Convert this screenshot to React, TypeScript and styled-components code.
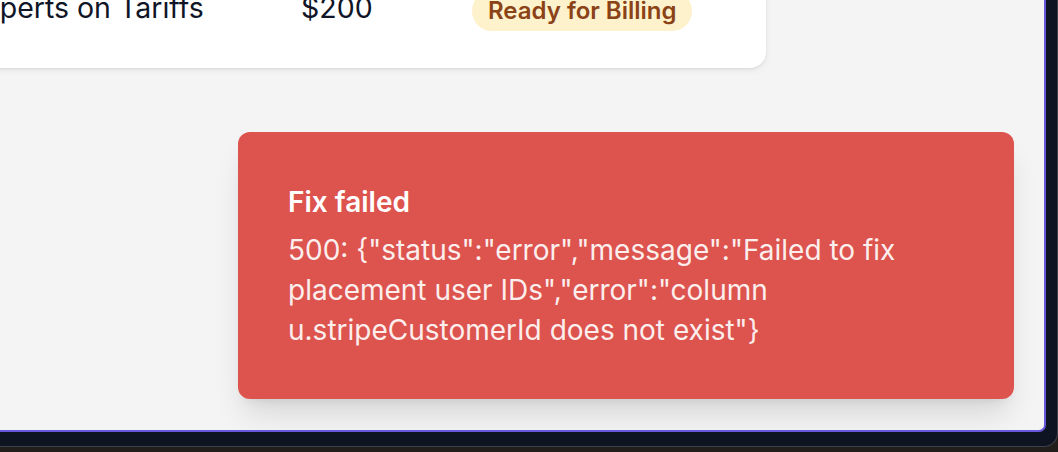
import React from "react";
import styled, { createGlobalStyle } from "styled-components";

const GlobalStyle = createGlobalStyle`
  html, body { margin: 0; padding: 0; background: #1f1c1b; }
  body { font-family: Inter, "Noto Sans", "Liberation Sans", sans-serif; -webkit-font-smoothing: antialiased; }
  * { box-sizing: border-box; }
`;

const Screen = styled.div`
  width: 1058px;
  height: 452px;
  overflow: hidden;
  background: #221e1c;
`;

const Frame = styled.div`
  width: 1058px;
  height: 447px;
  background: #0e1422;
  border-bottom: 1px solid #3d414b;
  border-right: 1px solid #3d414b;
  border-bottom-right-radius: 14px;
`;

const AppWindow = styled.div`
  position: relative;
  width: 1046px;
  height: 432px;
  overflow: hidden;
  background: #f4f4f4;
  border-right: 2px solid #6a58dc;
  border-bottom: 2px solid #6a58dc;
  border-bottom-right-radius: 7px;
`;

const Card = styled.div`
  margin-top: -41px;
  margin-left: -200px;
  width: 966px;
  background: #ffffff;
  border-radius: 16px;
  box-shadow: 0 2px 6px rgba(0, 0, 0, 0.08), 0 1px 2px rgba(0, 0, 0, 0.05);
  padding: 0 0 40px 0;
`;

const Row = styled.div`
  display: flex;
  align-items: baseline;
  height: 69px;
  padding-top: 29px;
`;

const Cell = styled.div<{ $w: number; $indent?: number }>`
  width: ${(p) => p.$w}px;
  padding-left: ${(p) => p.$indent ?? 0}px;
  flex: none;
  font-size: 28.5px;
  line-height: 40px;
  color: #0f1526;
  white-space: nowrap;
`;

const Badge = styled.span`
  display: inline-block;
  padding: 4px 16px;
  border-radius: 999px;
  background: #fdf2cb;
  color: #8b4217;
  font-size: 24px;
  line-height: 32px;
  font-weight: 600;
  position: relative;
  top: 1px;
`;

const Toast = styled.div`
  position: absolute;
  right: 30px;
  bottom: 31px;
  width: 776px;
  padding: 50px 62px 49px 50px;
  background: #dd534e;
  border-radius: 12px;
  box-shadow: 0 20px 30px -6px rgba(0, 0, 0, 0.12), 0 8px 12px -8px rgba(0, 0, 0, 0.1);
  display: grid;
  gap: 8px;
  color: #ffffff;
`;

const ToastTitle = styled.div`
  font-size: 28px;
  line-height: 40px;
  font-weight: 600;
`;

const ToastBody = styled.div`
  font-size: 28px;
  line-height: 40px;
  opacity: 0.9;
`;

export default function App() {
  return (
    <>
      <GlobalStyle />
      <Screen>
        <Frame>
          <AppWindow>
            <Card>
              <Row>
                <Cell $w={501} $indent={167}>Experts on Tariffs</Cell>
                <Cell $w={171}>$200</Cell>
                <Cell $w={240}>
                  <Badge>Ready for Billing</Badge>
                </Cell>
              </Row>
            </Card>
            <Toast>
              <ToastTitle>Fix failed</ToastTitle>
              <ToastBody>
                500: {'{"status":"error","message":"Failed to fix placement user IDs","error":"column u.stripeCustomerId does not exist"}'}
              </ToastBody>
            </Toast>
          </AppWindow>
        </Frame>
      </Screen>
    </>
  );
}
